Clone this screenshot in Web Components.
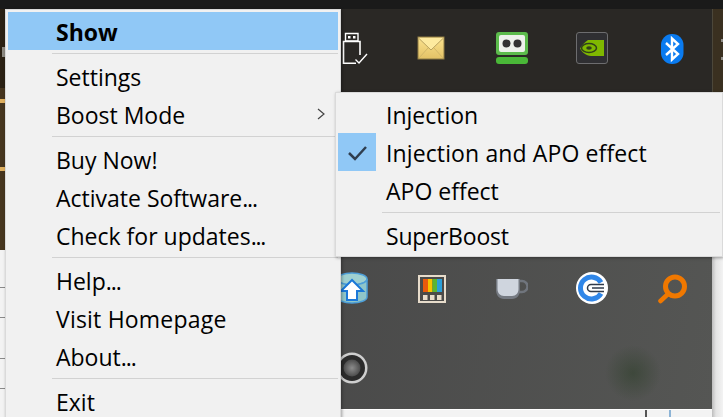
<!DOCTYPE html>
<html>
<head>
<meta charset="utf-8">
<title>Tray menu</title>
<style>
  html, body { margin: 0; height: 100%; overflow: hidden; }
  body { font-family: "Open Sans", "Noto Sans", sans-serif; }
</style>
</head>
<body>
<desktop-view>
  <tray-flyout slot="flyout">
    <tray-icon><svg viewBox="0 0 32 32"><path d="M9.500 1.500h12.500v7.500H9.500z" fill="none" stroke="#fff" stroke-width="1.400"/><path d="M12 4h2.500v2.500H12zM17 4h2.500v2.500H17z" fill="#fff"/><path d="M24 23V9.500H7.500V31.200H20" fill="none" stroke="#fff" stroke-width="1.600"/><path d="M19.500 27.500l3.500 3.500 8-9" fill="none" stroke="#fff" stroke-width="1.400"/></svg></tray-icon>
    <tray-icon><svg viewBox="0 0 32 32"><defs><linearGradient id="mail" x1="0" y1="0" x2="0" y2="1"><stop offset="0" stop-color="#fbe38e"/><stop offset="1" stop-color="#e3c266"/></linearGradient></defs><rect x="2" y="5" width="26" height="22" fill="url(#mail)" stroke="#8d7a45"/><path d="M2.500 6l12.500 12L27.500 6" fill="#fdea9f" stroke="#b9a25f"/><path d="M3 26l9-10M27 26l-9-10" stroke="#d2b768"/></svg></tray-icon>
    <tray-icon><svg viewBox="0 0 32 32"><rect width="32" height="23" rx="3" fill="#5cbb4c"/><rect x="3" y="3" width="26" height="17" rx="2" fill="#eef2ec"/><circle cx="10.500" cy="11.500" r="4" fill="#333"/><circle cx="21.500" cy="11.500" r="4" fill="#333"/><rect y="25" width="32" height="7" rx="3" fill="#4ab838"/></svg></tray-icon>
    <tray-icon><svg viewBox="0 0 32 32"><rect x=".5" y=".5" width="31" height="31" rx="2.500" fill="#2f2f32" stroke="#6d6d6f"/><path d="M12 8H28V24H15C10 24 6 20 4 16.500 6 13 9 10 12 8z" fill="#7fb800"/><ellipse cx="13" cy="16" rx="7.500" ry="4.500" fill="none" stroke="#31401a" stroke-width="1.500"/><ellipse cx="13" cy="16" rx="2.800" ry="1.800" fill="#31401a"/></svg></tray-icon>
    <tray-icon><svg viewBox="0 0 32 32"><rect x="5" y="2" width="22.500" height="30" rx="11" fill="#0a7bf0"/><path d="M10 11l12 11-6 5.500V6.500L22 12 10 23" fill="none" stroke="#fff" stroke-width="2.400"/></svg></tray-icon>

    <tray-icon></tray-icon><tray-icon></tray-icon><tray-icon></tray-icon><tray-icon></tray-icon><tray-icon></tray-icon>
    <tray-icon></tray-icon><tray-icon></tray-icon><tray-icon></tray-icon><tray-icon></tray-icon><tray-icon></tray-icon>

    <tray-icon><svg viewBox="0 0 32 32"><ellipse cx="16" cy="7" rx="15" ry="6" fill="#9fd0d0" stroke="#4e9fd8" stroke-width="1.500"/><path d="M1 7v18c0 3.500 7 6 15 6s15-2.500 15-6V7c0 3.500-7 6-15 6S1 10.500 1 7z" fill="#8fc6c9" stroke="#4e9fd8" stroke-width="1.500"/><path d="M16 8L5 19h6v9h10v-9h6z" fill="#fff" stroke="#1b78d8" stroke-width="2"/></svg></tray-icon>
    <tray-icon><svg viewBox="0 0 32 32"><rect x="3" y="4" width="26" height="26" fill="#4b4a48" stroke="#e7dccb" stroke-width="2"/><rect x="7" y="7" width="5" height="13" fill="#ea5a0c"/><rect x="12" y="7" width="4.500" height="13" fill="#f6c300"/><rect x="16.500" y="7" width="4.500" height="13" fill="#5cb531"/><rect x="21" y="7" width="5" height="13" fill="#2b9fd8"/><rect x="7" y="23" width="4.500" height="5" fill="#e7dccb"/><rect x="14" y="23" width="4.500" height="5" fill="#e7dccb"/><rect x="21" y="23" width="4.500" height="5" fill="#e7dccb"/></svg></tray-icon>
    <tray-icon><svg viewBox="0 0 32 32"><path d="M23 9h3a4 4 0 0 1 0 11h-3" fill="none" stroke="#70757d" stroke-width="2.500"/><path d="M0 7h24v11c0 5-3 9-8 9H8c-5 0-8-4-8-9z" fill="#757a82"/><path d="M1.500 7h21v10c0 4-2.500 7-6.500 7H8c-4 0-6.500-3-6.500-7z" fill="#cfd5de"/></svg></tray-icon>
    <tray-icon><svg viewBox="0 0 32 32"><circle cx="16" cy="16" r="16" fill="#fff"/><path d="M25 10.500A11 11 0 1 0 25 21.500" fill="none" stroke="#2f86e8" stroke-width="5"/><path d="M28 12.500H15a3.500 3.500 0 0 0 0 7h13" fill="none" stroke="#2f3a4a" stroke-width="1.500"/><path d="M16 16h12" stroke="#2f3a4a" stroke-width="1.500"/></svg></tray-icon>
    <tray-icon><svg viewBox="0 0 32 32"><circle cx="19" cy="14.500" r="9.500" fill="none" stroke="#f07800" stroke-width="5"/><path d="M12 22L4.500 29" stroke="#f07800" stroke-width="4.500" stroke-linecap="round"/></svg></tray-icon>

    <tray-icon><svg viewBox="0 0 32 32"><defs><radialGradient id="cone"><stop offset="0" stop-color="#8c8c8c"/><stop offset="1" stop-color="#4c4c4c"/></radialGradient></defs><circle cx="16" cy="16" r="15.500" fill="#cfcfcf"/><circle cx="16" cy="16" r="13" fill="#2b2b2b"/><circle cx="16" cy="16" r="8.500" fill="url(#cone)"/></svg></tray-icon>
    <tray-icon></tray-icon><tray-icon></tray-icon><tray-icon></tray-icon><tray-icon></tray-icon>
  </tray-flyout>

  <popup-menu slot="main" style="left:5px;top:9px;width:336px;padding-top:2px">
    <menu-item state="active" strong style="--text-drop:2px">Show</menu-item>
    <menu-sep style="margin-top:1px"></menu-sep>
    <menu-item>Settings</menu-item>
    <menu-item arrow>Boost Mode</menu-item>
    <menu-sep></menu-sep>
    <menu-item>Buy Now!</menu-item>
    <menu-item>Activate Software<span style="letter-spacing:-1.200px">...</span></menu-item>
    <menu-item>Check for updates<span style="letter-spacing:-1.200px">...</span></menu-item>
    <menu-sep></menu-sep>
    <menu-item>Help<span style="letter-spacing:-1px">...</span></menu-item>
    <menu-item style="letter-spacing:.2px">Visit Homepage</menu-item>
    <menu-item>About<span style="letter-spacing:-1px">...</span></menu-item>
    <menu-sep></menu-sep>
    <menu-item>Exit</menu-item>
  </popup-menu>

  <popup-menu slot="sub" style="left:335px;top:92px;width:388px;padding-top:2px;padding-bottom:2px;--text-drop:2px">
    <menu-item>Injection</menu-item>
    <menu-item checked style="letter-spacing:.12px">Injection and APO effect</menu-item>
    <menu-item>APO effect</menu-item>
    <menu-sep style="padding-top:3px"></menu-sep>
    <menu-item style="letter-spacing:-.2px">SuperBoost</menu-item>
  </popup-menu>
</desktop-view>

<script>
class DesktopView extends HTMLElement {
  constructor() {
    super();
    this.attachShadow({ mode: "open" });
    this.shadowRoot.innerHTML = `
      <style>
        :host { display: block; position: relative; width: 723px; height: 417px; overflow: hidden; background: #f3f3f3; }
        .top { position: absolute; left: 0; top: 0; width: 100%; height: 9px; background: #1a1a1a; }
        .left { position: absolute; left: 0; top: 9px; width: 5px; height: 241px;
          background: linear-gradient(#2b2114 0 79px, #47361f 79px); }
        .stripe { position: absolute; left: 0; width: 5px; height: 4px; background: #e0b060; }
        .knob { position: absolute; left: 2px; top: 47px; width: 3px; height: 10px; background: #8d8a82; }
        .right { position: absolute; left: 712px; top: 9px; width: 11px; height: 241px; background: #3a3020; border-left: 1px solid #4c473a; box-sizing: border-box; }
        .mark { position: absolute; left: 721px; width: 2px; height: 3px; background: #8f8d88; }
        .line { position: absolute; left: 0; width: 5px; height: 1px; background: #8a8a8a; }
        .fade { position: absolute; left: 712px; top: 250px; width: 11px; height: 167px;
          background: linear-gradient(90deg, #bdbdbd, #e4e4e4 4px, #f3f3f3); }
        .tick { position: absolute; top: 409px; width: 2px; height: 8px; }
      </style>
      <div class="top"></div>
      <div class="left"></div>
      <div class="knob"></div>
      <div class="stripe" style="top:99px"></div>
      <div class="stripe" style="top:167px"></div>
      <div class="right"></div>
      <div class="mark" style="top:39px"></div>
      <div class="mark" style="top:57px"></div>
      <div class="fade"></div>
      <div class="line" style="top:287px"></div>
      <div class="line" style="top:317px"></div>
      <div class="line" style="top:358px"></div>
      <div class="line" style="top:388px"></div>
      <div class="tick" style="left:645px;background:#555"></div>
      <div class="tick" style="left:669px;background:#8db4d6"></div>
      <slot name="flyout"></slot>
      <slot name="main"></slot>
      <slot name="sub"></slot>
    `;
  }
}

class TrayFlyout extends HTMLElement {
  constructor() {
    super();
    this.attachShadow({ mode: "open" });
    this.shadowRoot.innerHTML = `
      <style>
        :host { position: absolute; left: 312px; top: 8px; width: 400px; height: 401px;
          display: grid; grid-template-columns: repeat(5, 80px); grid-auto-rows: 80px;
          background:
            radial-gradient(circle 28px at 321px 365px, rgba(48,64,44,.6), rgba(48,64,44,0)),
            linear-gradient(#1a1a1a 0 1px, #2a2825 1px 242px, rgba(0,0,0,0) 242px),
            linear-gradient(100deg, #484848, #555654);
          border-bottom: 1px solid #fff; box-sizing: content-box; }
      </style>
      <slot></slot>
    `;
  }
}

class TrayIcon extends HTMLElement {
  constructor() {
    super();
    this.attachShadow({ mode: "open" });
    this.shadowRoot.innerHTML = `
      <style>
        :host { display: flex; align-items: center; justify-content: center; }
        ::slotted(svg) { width: 32px; height: 32px; display: block; }
      </style>
      <slot></slot>
    `;
  }
}

class PopupMenu extends HTMLElement {
  constructor() {
    super();
    this.attachShadow({ mode: "open" });
    this.shadowRoot.innerHTML = `
      <style>
        :host { position: absolute; box-sizing: border-box; display: block; color: #000;
          background: #f1f1f1; border: 1px solid #dadada; padding: 0 2px;
          box-shadow: 1px 1px 3px rgba(0,0,0,.35);
          font: 400 23px/26px "Open Sans", "Noto Sans", sans-serif; }
      </style>
      <slot></slot>
    `;
  }
}

class MenuItem extends HTMLElement {
  constructor() {
    super();
    this.attachShadow({ mode: "open" });
    this.shadowRoot.innerHTML = `
      <style>
        :host { display: flex; align-items: center; box-sizing: border-box; height: 38px;
          padding: var(--text-drop, 0px) 0 0 48px; position: relative; white-space: pre; }
        :host([state="active"]) { background: #90c8f6; }
        :host([strong]) { font-weight: 700; }
        .check { display: none; position: absolute; left: 0; top: 0; width: 38px; height: 38px; background: #90c8f6; }
        :host([checked]) .check { display: block; }
        .arrow { display: none; position: absolute; right: 12px; top: 12px; width: 10px; height: 12px; }
        :host([arrow]) .arrow { display: block; }
      </style>
      <span class="check"><svg viewBox="0 0 38 38" width="38" height="38"><path d="M11 20l6 6 11-12" fill="none" stroke="#2f3e4f" stroke-width="2.500"/></svg></span>
      <span><slot></slot></span>
      <svg class="arrow" viewBox="0 0 10 12"><path d="M2 1l6 5-6 5" fill="none" stroke="#444" stroke-width="1.200"/></svg>
    `;
  }
}

class MenuSep extends HTMLElement {
  constructor() {
    super();
    this.attachShadow({ mode: "open" });
    this.shadowRoot.innerHTML = `
      <style>
        :host { display: block; height: 7px; box-sizing: border-box; padding-top: 2px; margin-left: 44px; }
        div { height: 1px; background: #d2d2d2; }
      </style>
      <div></div>
    `;
  }
}

customElements.define("desktop-view", DesktopView);
customElements.define("tray-flyout", TrayFlyout);
customElements.define("tray-icon", TrayIcon);
customElements.define("popup-menu", PopupMenu);
customElements.define("menu-item", MenuItem);
customElements.define("menu-sep", MenuSep);
</script>
</body>
</html>
